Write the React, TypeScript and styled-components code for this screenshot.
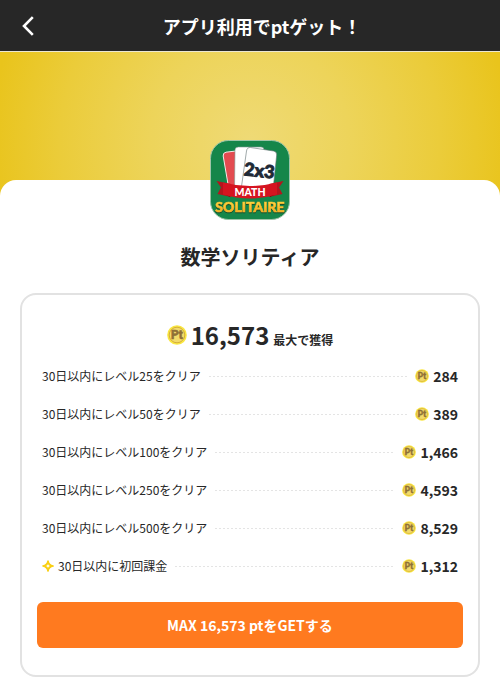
import React from "react";
import styled, { createGlobalStyle } from "styled-components";

const GlobalStyle = createGlobalStyle`
  *, *::before, *::after { box-sizing: border-box; }
  body {
    margin: 0;
    background: #fff;
    color: #272727;
    font-family: "Noto Sans CJK JP", "Noto Sans", sans-serif;
  }
  h1, h2, p, ul { margin: 0; padding: 0; }
`;

const Header = styled.header`
  display: grid;
  grid-template-columns: 56px 1fr 32px;
  align-items: center;
  height: 52px;
  background: #272727;
  border-bottom: 1px solid #ece7d2;
  color: #fff;
`;

const BackButton = styled.button`
  display: flex;
  align-items: center;
  justify-content: center;
  height: 51px;
  padding: 0;
  border: 0;
  background: none;
  color: inherit;
  cursor: pointer;
`;

const HeaderTitle = styled.h1`
  font-size: 18px;
  line-height: 26px;
  font-weight: 700;
  text-align: center;
`;

const Hero = styled.div`
  height: 148px;
  background: radial-gradient(circle at 50% 60%, #efda76 0, #edd45a 100px, #ebcc3a 190px, #e9c41c 260px);
`;

const Sheet = styled.main`
  display: flex;
  flex-direction: column;
  align-items: center;
  margin-top: -20px;
  padding: 0 20px 23px;
  border-radius: 16px 16px 0 0;
  background: #fff;
`;

const AppIcon = styled.svg`
  display: block;
  width: 80px;
  height: 80px;
  margin-top: -40px;
`;

const AppName = styled.h2`
  margin-top: 22px;
  font-size: 20px;
  line-height: 30px;
  font-weight: 700;
`;

const Card = styled.section`
  align-self: stretch;
  margin-top: 21px;
  padding: 24px 15px 27px;
  border: 2px solid #e2e2e2;
  border-radius: 16px;
`;

const Total = styled.p`
  display: flex;
  align-items: flex-start;
  justify-content: center;
  height: 38px;
  gap: 4px;
`;

const TotalCoin = styled.span`
  display: flex;
  align-items: center;
  height: 32px;
`;

const TotalText = styled.span`
  font-size: 12px;
  line-height: 34px;
  font-weight: 700;
`;

const TotalNumber = styled.strong`
  margin-right: 4px;
  font-size: 24px;
  line-height: 32px;
  font-weight: 700;
`;

const StepList = styled.ul`
  padding: 0 5px;
  list-style: none;
`;

const Step = styled.li`
  display: flex;
  align-items: center;
  height: 38px;
`;

const StepLabel = styled.span`
  display: flex;
  align-items: center;
  gap: 4px;
  font-size: 12px;
  line-height: 18px;
`;

const Leader = styled.span`
  flex: 1;
  margin: 0 8px;
  height: 1px;
  background: repeating-linear-gradient(to right, #e4e4e4 0 2px, transparent 2px 4px);
`;

const Points = styled.span`
  display: flex;
  align-items: center;
  gap: 4px;
  font-size: 14px;
  line-height: 20px;
  font-weight: 700;
`;

const GetButton = styled.button`
  display: block;
  width: 100%;
  height: 46px;
  margin-top: 17px;
  padding: 0;
  border: 0;
  border-radius: 6px;
  background: #ff7a1f;
  color: #fff;
  font-family: inherit;
  font-size: 14px;
  line-height: 20px;
  font-weight: 700;
  cursor: pointer;
`;

const CoinSvg = styled.svg<{ $size: number }>`
  flex: none;
  width: ${(p) => p.$size}px;
  height: ${(p) => p.$size}px;
`;

const Coin = ({ size }: { size: number }) => (
  <CoinSvg $size={size} viewBox="0 0 20 20" aria-hidden="true">
    <circle cx="10" cy="10" r="9.8" fill="#f9e640" />
    <circle cx="10" cy="10" r="7.8" fill="#f3db6a" stroke="#d0a838" strokeWidth="0.9" />
    <text
      x="10"
      y="14.2"
      textAnchor="middle"
      fontFamily="Roboto, sans-serif"
      fontWeight="700"
      fontSize="12"
      fill="#8f7036"
      stroke="#8f7036"
      strokeWidth="0.6"
    >
      Pt
    </text>
  </CoinSvg>
);

const Sparkle = () => (
  <svg width="12" height="12" viewBox="0 0 12 12" aria-hidden="true">
    <path
      d="M6 0.9C6.5 3.6 8.4 5.5 11.1 6C8.4 6.5 6.5 8.4 6 11.1C5.5 8.4 3.6 6.5 0.9 6C3.6 5.5 5.5 3.6 6 0.9Z"
      fill="#f9cf12"
      stroke="#f9cf12"
      strokeWidth="1.5"
      strokeLinejoin="round"
    />
    <path d="M6 4.2L7.8 6L6 7.8L4.2 6Z" fill="#fffbe6" />
  </svg>
);

const GameName = styled.text`
  font-family: Lato, sans-serif;
  font-size: 14px;
  font-weight: 900;
  fill: url(#gold);
  stroke: #f7bd2d;
  stroke-width: 0.6px;
  filter: drop-shadow(0 1px 0 #174a2a);
`;

const SolitaireIcon = () => (
  <AppIcon viewBox="0 0 80 80" role="img" aria-label="Math Solitaire">
    <defs>
      <linearGradient id="gold" x1="0" y1="0" x2="0" y2="1">
        <stop offset="0.2" stopColor="#ffdc4a" />
        <stop offset="0.9" stopColor="#f0a51c" />
      </linearGradient>
    </defs>
    <rect x="0.5" y="0.5" width="79" height="79" rx="18" fill="#15864a" stroke="#9fc5a8" />
    <path d="M16 12.2L26 11L28 50H19L13.2 16Q12.8 12.8 16 12.2Z" fill="#e34b50" stroke="#f5e9e9" strokeWidth="1" />
    <path d="M28.5 7H51Q54 7 54 10V50H24.5L25 10Q25 7 28.5 7Z" fill="#fff" stroke="#7d9990" strokeWidth="0.6" />
    <path d="M40.5 7.5L63.5 11Q67 11.6 66.7 15L63 50H31L36.5 11Q37.1 7.2 40.5 7.5Z" fill="#fff" stroke="#5f6f70" strokeWidth="0.6" />
    <path d="M6.5 41L21 44V57L7.5 54L11 47.5Z" fill="#b5141d" />
    <path d="M73.5 41L59 44V57L72.5 54L69 47.5Z" fill="#b5141d" />
    <path d="M14 54L20 57V55Z" fill="#6b0f14" />
    <path d="M66 54L60 57V55Z" fill="#6b0f14" />
    <path d="M13 42.5Q40 49.5 67 42.5V54.5Q40 62.5 13 54.5Z" fill="#d51420" />
    <text
      x="49.5"
      y="37"
      textAnchor="middle"
      fontFamily="Lato, sans-serif"
      fontWeight="900"
      fontSize="18"
      fill="#202936"
      stroke="#202936"
      strokeWidth="0.9"
      transform="rotate(6 49.5 30)"
    >
      2x3
    </text>
    <text
      x="40"
      y="56"
      textAnchor="middle"
      fontFamily="Lato, sans-serif"
      fontWeight="900"
      fontSize="10.5"
      fill="#fff"
    >
      MATH
    </text>
    <GameName x="40" y="72" textAnchor="middle">
      SOLITAIRE
    </GameName>
  </AppIcon>
);

type StepData = { label: string; points: string; special?: boolean };

const steps: StepData[] = [
  { label: "30日以内にレベル25をクリア", points: "284" },
  { label: "30日以内にレベル50をクリア", points: "389" },
  { label: "30日以内にレベル100をクリア", points: "1,466" },
  { label: "30日以内にレベル250をクリア", points: "4,593" },
  { label: "30日以内にレベル500をクリア", points: "8,529" },
  { label: "30日以内に初回課金", points: "1,312", special: true },
];

export default function App() {
  return (
    <>
      <GlobalStyle />
      <Header>
        <BackButton type="button" aria-label="戻る">
          <svg width="12" height="20" viewBox="0 0 12 20" fill="none" aria-hidden="true">
            <path d="M10.8 1.2L2 10L10.8 18.8" stroke="currentColor" strokeWidth="2.6" />
          </svg>
        </BackButton>
        <HeaderTitle>アプリ利用でptゲット！</HeaderTitle>
      </Header>
      <Hero />
      <Sheet>
        <SolitaireIcon />
        <AppName>数学ソリティア</AppName>
        <Card>
          <Total>
            <TotalCoin>
              <Coin size={20} />
            </TotalCoin>
            <TotalText>
              <TotalNumber>16,573</TotalNumber>最大で獲得
            </TotalText>
          </Total>
          <StepList>
            {steps.map((step) => (
              <Step key={step.label}>
                <StepLabel>
                  {step.special && <Sparkle />}
                  {step.label}
                </StepLabel>
                <Leader />
                <Points>
                  <Coin size={14} />
                  {step.points}
                </Points>
              </Step>
            ))}
          </StepList>
          <GetButton type="button">MAX 16,573 ptをGETする</GetButton>
        </Card>
      </Sheet>
    </>
  );
}
